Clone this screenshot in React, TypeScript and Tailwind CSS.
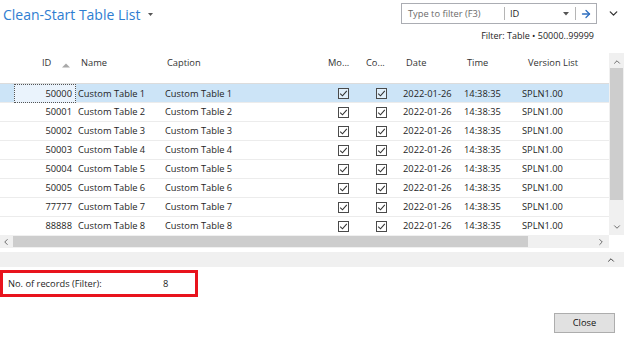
import { ChevronDown, ChevronUp, ChevronLeft, ChevronRight, ArrowRight } from 'lucide-react';

const rows = [
  { id: '50000', name: 'Custom Table 1' },
  { id: '50001', name: 'Custom Table 2' },
  { id: '50002', name: 'Custom Table 3' },
  { id: '50003', name: 'Custom Table 4' },
  { id: '50004', name: 'Custom Table 5' },
  { id: '50005', name: 'Custom Table 6' },
  { id: '77777', name: 'Custom Table 7' },
  { id: '88888', name: 'Custom Table 8' },
];

const cols = 'grid grid-cols-[76px_87px_160px_39px_37px_61px_58px_91px]';

function Check() {
  return (
    <div className="w-[11px] h-[11px] border border-[#4a4a4a] flex items-center justify-center bg-white/40">
      <svg width="9" height="9" viewBox="0 0 9 9">
        <path d="M1.2 4.6 L3.5 6.8 L7.8 1.8" fill="none" stroke="#333" strokeWidth="1.1" />
      </svg>
    </div>
  );
}

export default function App() {
  return (
    <div className="w-[624px] h-[340px] bg-white overflow-hidden font-['Open_Sans',sans-serif] text-[9.3px] text-[#1e1e1e] flex flex-col">
      {/* title bar */}
      <div className="h-[27px] flex items-center">
        <span className="pl-[3px] text-[14px] text-[#2e7dd1] leading-none pt-[2px]">Clean-Start Table List</span>
        <svg width="5" height="3" viewBox="0 0 5 3" className="ml-[8px] mt-[1px]">
          <path d="M0 0 L5 0 L2.5 3 Z" fill="#555" />
        </svg>
        <div className="ml-auto w-[196px] h-[21px] border border-[#abadb3] flex items-center">
          <span className="pl-[6px] w-[102px] text-[#6a6a6a]">Type to filter (F3)</span>
          <div className="w-px h-[13px] bg-[#b5b5b5]" />
          <span className="pl-[5px] flex-1">ID</span>
          <svg width="6" height="4" viewBox="0 0 6 4" className="mr-[6px]">
            <path d="M0 0 L6 0 L3 3.5 Z" fill="#555" />
          </svg>
          <div className="w-px h-[13px] bg-[#b5b5b5]" />
          <ArrowRight size={12} strokeWidth={2.6} className="mx-[4px] text-[#2e6fc0]" />
        </div>
        <ChevronDown size={13} strokeWidth={2.4} className="ml-[10px] mr-[4px] text-[#333]" />
      </div>

      {/* filter line */}
      <div className="h-[18px] flex items-center justify-end pr-[30px] text-[9px]">
        Filter: Table • 50000..99999
      </div>

      {/* grid */}
      <div className="mt-[8px] flex h-[182px]">
        <div className="w-[609px] overflow-hidden">
          <div className={`${cols} h-[30px] items-start pt-[3px] text-[#333]`}>
            <div className="pl-[42px] flex items-start">
              ID
              <svg width="8" height="5" viewBox="0 0 8 5" className="ml-[11px] mt-[7px]">
                <path d="M0 4.5 L4 0.5 L8 4.5 Z" fill="#a8a8a8" />
              </svg>
            </div>
            <div className="pl-[5px]">Name</div>
            <div className="pl-[4px]">Caption</div>
            <div className="pl-[5px]">Mo...</div>
            <div className="pl-[4px]">Co...</div>
            <div className="pl-[7px]">Date</div>
            <div className="pl-[7px]">Time</div>
            <div className="pl-[10px]">Version List</div>
          </div>
          <div className="border-t border-[#dcdcdc]">
            {rows.map((r, i) => (
              <div
                key={r.id}
                className={`${cols} h-[19px] items-center border-b border-[#ececec] ${i === 0 ? 'bg-[#cce4f7]' : ''}`}
              >
                {i === 0 ? (
                  <div className="ml-[14px] h-[19px] border border-dotted border-[#555] bg-[#eaf3fc] flex items-center justify-end pr-[3px]">
                    {r.id}
                  </div>
                ) : (
                  <div className="text-right pr-[4px]">{r.id}</div>
                )}
                <div className="pl-[2px]">{r.name}</div>
                <div className="pl-[2px]">{r.name}</div>
                <div className="pl-[15px]"><Check /></div>
                <div className="pl-[14px]"><Check /></div>
                <div className="pl-[4px]">2022-01-26</div>
                <div className="pl-[4px]">14:38:35</div>
                <div className="pl-[4px]">SPLN1.00</div>
              </div>
            ))}
          </div>
        </div>
        <div className="w-[15px] bg-[#f0f0f0] flex flex-col items-center">
          <ChevronUp size={10} strokeWidth={2.2} className="mt-[4px] text-[#606060]" />
          <div className="mt-[1px] w-[13px] h-[132px] bg-[#cdcdcd]" />
          <ChevronDown size={10} strokeWidth={2.2} className="mt-auto mb-[3px] text-[#606060]" />
        </div>
      </div>

      {/* horizontal scrollbar */}
      <div className="flex h-[13px]">
        <div className="w-[609px] bg-[#f0f0f0] flex items-center">
          <ChevronLeft size={10} strokeWidth={2.2} className="ml-[1px] text-[#606060]" />
          <div className="ml-[2px] w-[515px] h-[11px] bg-[#cdcdcd]" />
          <ChevronRight size={10} strokeWidth={2.2} className="ml-auto mr-[3px] text-[#606060]" />
        </div>
        <div className="w-[15px] bg-white" />
      </div>

      {/* factbox bar */}
      <div className="mt-[4px] h-[15px] bg-[#f0f0f0] flex items-center justify-end pr-[8px]">
        <ChevronUp size={10} strokeWidth={2.2} className="text-[#333]" />
      </div>

      {/* records count */}
      <div className="mt-[3px] w-[198px] h-[27px] border-[3px] border-[#e8131d] flex items-center">
        <span className="pl-[5px] w-[160px]">No. of records (Filter):</span>
        <span>8</span>
      </div>

      {/* footer */}
      <div className="mt-[16px] flex justify-end pr-[9px]">
        <button className="w-[61px] h-[20px] bg-[#e1e1e1] border border-[#adadad] text-[9.3px] text-[#111]">
          Close
        </button>
      </div>
    </div>
  );
}
